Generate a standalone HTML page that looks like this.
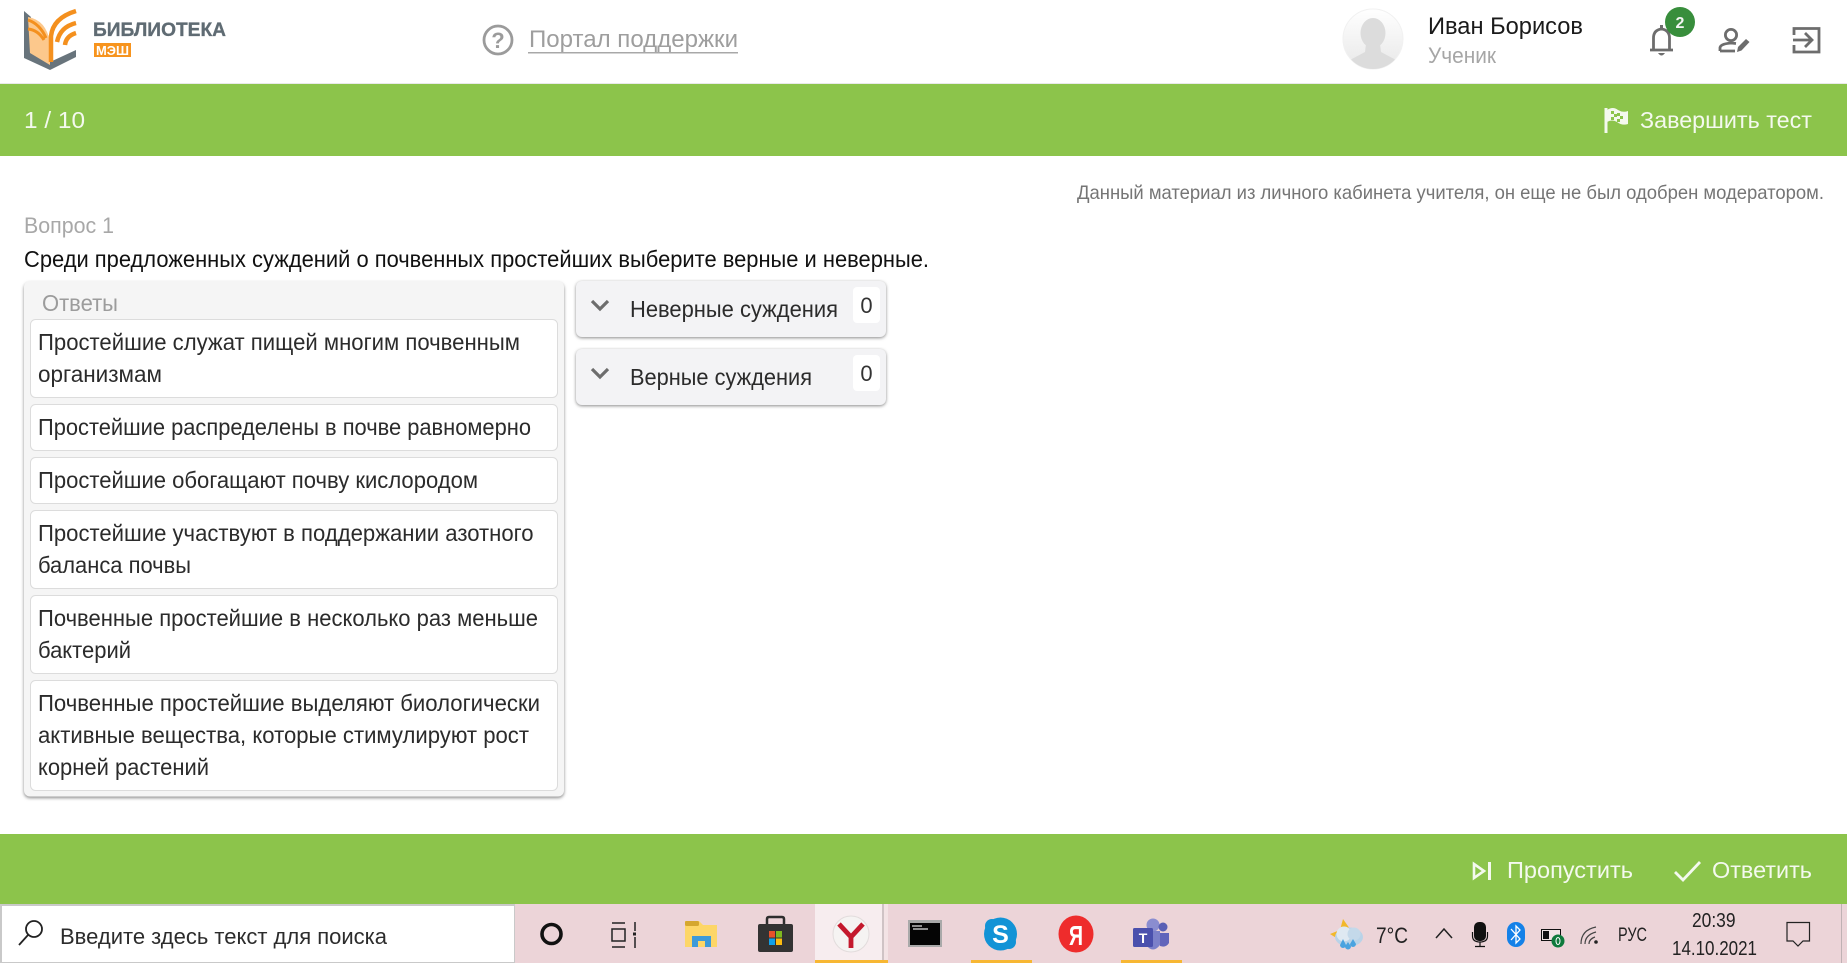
<!DOCTYPE html>
<html lang="ru"><head><meta charset="utf-8"><title>Библиотека МЭШ</title>
<style>
html,body{margin:0;padding:0;background:#fff;width:1847px;height:963px;overflow:hidden}
svg{display:block}
text{font-family:"Liberation Sans","DejaVu Sans",sans-serif}
.b{font-size:23px;fill:#2b2b2b}
.w{font-size:23px;fill:#f4f9ee}
.t{font-size:22px;fill:#2c2c2c}
</style></head><body>
<svg xmlns="http://www.w3.org/2000/svg" width="1847" height="963" viewBox="0 0 1847 963">
<defs>
<linearGradient id="av" x1="0" y1="0" x2="0" y2="1"><stop offset="0" stop-color="#fff"/><stop offset="1" stop-color="#e8e8e8"/></linearGradient>
<clipPath id="avc"><circle cx="1373" cy="39" r="30"/></clipPath>
<filter id="sh" x="-5%" y="-5%" width="110%" height="115%"><feGaussianBlur stdDeviation="1.500"/></filter>
</defs>
<rect width="1847" height="963" fill="#fff"/>
<!-- logo -->
<path d="M24 11 L24 58 L50 70 L76 57 L76 50 L50 62 L31 53 L31 17 Z" fill="#68747c"/>
<path d="M28 17 Q46 20 50 42 L50 65 L30 53 Z" fill="#fcc88c"/>
<path d="M28 20 Q40 24 46 38 M28 29 Q38 30 44 40" stroke="#f4901e" stroke-width="3" fill="none"/>
<path d="M51 62 L51 36 Q53 18 76 11" stroke="#f4901e" stroke-width="4.500" fill="none"/>
<path d="M57 42 Q60 27 76 23 M65 45 Q66 36 76 33" stroke="#f4901e" stroke-width="4.500" fill="none"/>
<text x="93" y="36" font-size="19" font-weight="bold" fill="#5f6b73" stroke="#5f6b73" stroke-width=".3" textLength="133" lengthAdjust="spacingAndGlyphs">БИБЛИОТЕКА</text>
<rect x="94" y="43" width="37" height="14" fill="#f7941e"/>
<text x="96" y="55" font-size="13" font-weight="bold" fill="#fff" textLength="33" lengthAdjust="spacingAndGlyphs">МЭШ</text>
<!-- portal -->
<circle cx="498" cy="40" r="14" fill="none" stroke="#9b9b9b" stroke-width="2.800"/>
<text x="498" y="48" font-size="22" font-weight="bold" fill="#9b9b9b" text-anchor="middle">?</text>
<text x="529" y="47" font-size="24" fill="#9e9e9e" textLength="209" lengthAdjust="spacingAndGlyphs">Портал поддержки</text>
<rect x="528" y="52" width="210" height="1.500" fill="#a8a8a8"/>
<!-- user -->
<circle cx="1373" cy="39" r="30" fill="url(#av)" stroke="#f1f1f1"/>
<g clip-path="url(#avc)" fill="#dcdcdc">
<ellipse cx="1373" cy="33" rx="12.500" ry="15"/>
<path d="M1366 44 L1380 44 L1381 52 L1396 60 L1398 72 L1348 72 L1350 60 L1365 52 Z"/>
</g>
<text x="1428" y="34" font-size="24.500" fill="#1a1a1a" textLength="155" lengthAdjust="spacingAndGlyphs">Иван Борисов</text>
<text x="1428" y="63" font-size="22" fill="#a6a6a6" textLength="68" lengthAdjust="spacingAndGlyphs">Ученик</text>
<!-- bell -->
<path d="M1650 50 L1673 50 M1653.500 49 L1653.500 38 Q1653.500 30 1661.500 29 Q1669.500 30 1669.500 38 L1669.500 49" fill="none" stroke="#6d6d6d" stroke-width="2.800"/>
<rect x="1660" y="25" width="3" height="4" fill="#6d6d6d"/>
<path d="M1658 53 Q1661.500 58 1665 53 Z" fill="#6d6d6d"/>
<circle cx="1680" cy="22" r="15" fill="#388e3c"/>
<text x="1680" y="28" font-size="16" font-weight="bold" fill="#f4f4f4" text-anchor="middle">2</text>
<!-- user edit -->
<circle cx="1731" cy="35" r="5.600" fill="none" stroke="#6d6d6d" stroke-width="2.800"/>
<path d="M1720 51 L1720 48 Q1720 44 1731 43 L1736 43.500 M1720 51 L1735 51" fill="none" stroke="#6d6d6d" stroke-width="2.800"/>
<path d="M1737 52 L1738 47 L1746 39 L1749.500 42 L1741.500 50.500 Z" fill="#6d6d6d"/>
<!-- exit -->
<path d="M1794 35 L1794 28.500 L1819 28.500 L1819 52 L1794 52 L1794 45" fill="none" stroke="#6d6d6d" stroke-width="2.800"/>
<path d="M1793 40 L1812 40 M1805 33 L1812 40 L1805 47" fill="none" stroke="#6d6d6d" stroke-width="2.800"/>
<!-- top bar -->
<rect x="0" y="83" width="1847" height="1" fill="#e9e9e9"/>
<rect x="0" y="84" width="1847" height="72" fill="#8cc44b"/>
<text x="24" y="128" class="w" textLength="61" lengthAdjust="spacingAndGlyphs">1 / 10</text>
<path d="M1606 108 L1606 133" stroke="#f4f9ee" stroke-width="3"/>
<path d="M1607 110 Q1613 106 1618 110 Q1623 113 1628 111 L1628 124 Q1622 126 1617 122 Q1612 119 1607 122 Z" fill="#f4f9ee"/>
<path d="M1611 111 h3 v3 h-3z M1617 113 h3 v3 h-3z M1614 114 h3 v3 h-3z M1620 116 h3 v3 h-3z M1611 117 h3 v3 h-3z M1617 119 h3 v3 h-3z" fill="#8cc44b"/>
<text x="1640" y="128" class="w" textLength="172" lengthAdjust="spacingAndGlyphs">Завершить тест</text>
<!-- headers -->
<text x="1077" y="199" font-size="19.500" fill="#757575" textLength="747" lengthAdjust="spacingAndGlyphs">Данный материал из личного кабинета учителя, он еще не был одобрен модератором.</text>
<text x="24" y="233" font-size="22" fill="#a8a8a8" textLength="90" lengthAdjust="spacingAndGlyphs">Вопрос 1</text>
<text x="24" y="267" font-size="23" fill="#111" textLength="905" lengthAdjust="spacingAndGlyphs">Среди предложенных суждений о почвенных простейших выберите верные и неверные.</text>
<!-- answers panel -->
<rect x="24" y="283" width="540" height="515" rx="6" fill="#8a8a8a" filter="url(#sh)"/>
<rect x="24" y="281" width="540" height="515.500" rx="6" fill="#f5f5f5"/>
<text x="42" y="311" font-size="23" fill="#9c9c9c" textLength="76" lengthAdjust="spacingAndGlyphs">Ответы</text>
<g fill="#fff" stroke="#dcdcdc" stroke-width="1">
<rect x="30.500" y="319.500" width="527" height="78" rx="5"/>
<rect x="30.500" y="404.500" width="527" height="46" rx="5"/>
<rect x="30.500" y="457.500" width="527" height="46" rx="5"/>
<rect x="30.500" y="510.500" width="527" height="78" rx="5"/>
<rect x="30.500" y="595.500" width="527" height="78" rx="5"/>
<rect x="30.500" y="680.500" width="527" height="110" rx="5"/>
</g>
<text x="38" y="350" class="b" textLength="482" lengthAdjust="spacingAndGlyphs">Простейшие служат пищей многим почвенным</text>
<text x="38" y="382" class="b" textLength="124" lengthAdjust="spacingAndGlyphs">организмам</text>
<text x="38" y="435" class="b" textLength="493" lengthAdjust="spacingAndGlyphs">Простейшие распределены в почве равномерно</text>
<text x="38" y="488" class="b" textLength="440" lengthAdjust="spacingAndGlyphs">Простейшие обогащают почву кислородом</text>
<text x="38" y="541" class="b" textLength="495.500" lengthAdjust="spacingAndGlyphs">Простейшие участвуют в поддержании азотного</text>
<text x="38" y="573" class="b" textLength="153" lengthAdjust="spacingAndGlyphs">баланса почвы</text>
<text x="38" y="626" class="b" textLength="500" lengthAdjust="spacingAndGlyphs">Почвенные простейшие в несколько раз меньше</text>
<text x="38" y="658" class="b" textLength="93" lengthAdjust="spacingAndGlyphs">бактерий</text>
<text x="38" y="711" class="b" textLength="502" lengthAdjust="spacingAndGlyphs">Почвенные простейшие выделяют биологически</text>
<text x="38" y="743" class="b" textLength="491" lengthAdjust="spacingAndGlyphs">активные вещества, которые стимулируют рост</text>
<text x="38" y="775" class="b" textLength="171" lengthAdjust="spacingAndGlyphs">корней растений</text>
<!-- right panels -->
<rect x="576" y="282" width="310" height="56" rx="6" fill="#8a8a8a" filter="url(#sh)"/>
<rect x="576" y="281" width="310" height="56" rx="6" fill="#f3f3f5"/>
<rect x="853" y="287" width="27" height="36" rx="4" fill="#fff"/>
<path d="M592 301 L600 309 L608 301" fill="none" stroke="#6d6d6d" stroke-width="3.200"/>
<text x="630" y="317" class="b" textLength="208" lengthAdjust="spacingAndGlyphs">Неверные суждения</text>
<text x="866.500" y="313" font-size="22" fill="#333" text-anchor="middle">0</text>
<rect x="576" y="350" width="310" height="56" rx="6" fill="#8a8a8a" filter="url(#sh)"/>
<rect x="576" y="349" width="310" height="56" rx="6" fill="#f3f3f5"/>
<rect x="853" y="355" width="27" height="36" rx="4" fill="#fff"/>
<path d="M592 369 L600 377 L608 369" fill="none" stroke="#6d6d6d" stroke-width="3.200"/>
<text x="630" y="385" class="b" textLength="182" lengthAdjust="spacingAndGlyphs">Верные суждения</text>
<text x="866.500" y="381" font-size="22" fill="#333" text-anchor="middle">0</text>
<!-- bottom bar -->
<rect x="0" y="834" width="1847" height="70" fill="#8cc44b"/>
<path d="M1474 864 L1484 871 L1474 878 Z" fill="none" stroke="#f4f9ee" stroke-width="2.600"/>
<rect x="1488" y="862" width="3" height="18" fill="#f4f9ee"/>
<text x="1507" y="878" class="w" textLength="126" lengthAdjust="spacingAndGlyphs">Пропустить</text>
<path d="M1675 872 L1683 880 L1700 862" fill="none" stroke="#f4f9ee" stroke-width="2.800"/>
<text x="1712" y="878" class="w" textLength="100" lengthAdjust="spacingAndGlyphs">Ответить</text>
<!-- taskbar -->
<rect x="0" y="904" width="1847" height="59" fill="#ecd4d8"/>
<rect x="0" y="904" width="515" height="59" fill="#c9c9c9"/>
<rect x="2" y="906" width="512" height="56" fill="#fff"/>
<circle cx="34" cy="929" r="8" fill="none" stroke="#222" stroke-width="1.800"/>
<path d="M28 935 L19 945" stroke="#222" stroke-width="1.800"/>
<text x="60" y="944" class="t" textLength="327" lengthAdjust="spacingAndGlyphs">Введите здесь текст для поиска</text>
<circle cx="551.500" cy="934" r="9.500" fill="none" stroke="#111" stroke-width="3.600"/>
<!-- task view -->
<path d="M612 923 H625 M612 947 H625 M612 929 H625 V941 H612 Z M635 922 V931 M635 937 V948" fill="none" stroke="#222" stroke-width="1.500"/>
<rect x="633" y="932.500" width="3" height="3" fill="#222"/>
<!-- explorer -->
<path d="M685 921 H699 L703 925 H717 V947 H685 Z" fill="#fdd667"/>
<rect x="685" y="921" width="14" height="5" rx="1.500" fill="#d5a72f"/>
<path d="M692 947 V936 H711 V947 H705 V941 H698 V947 Z" fill="#3d9ad9"/>
<rect x="698" y="941" width="7" height="6" fill="#fdd667"/>
<!-- store -->
<path d="M767 927 V919 Q767 917 769 917 H782 Q784 917 784 919 V927" fill="none" stroke="#2e2e2e" stroke-width="2.500"/>
<rect x="758" y="924" width="35" height="28" rx="2" fill="#333"/>
<rect x="769" y="931" width="6" height="6.500" fill="#e8512a"/><rect x="776" y="931" width="6" height="6.500" fill="#7fb81f"/>
<rect x="769" y="938.500" width="6" height="6.500" fill="#10a0e8"/><rect x="776" y="938.500" width="6" height="6.500" fill="#fbbb10"/>
<!-- yandex browser -->
<rect x="815" y="904" width="67" height="59" fill="#f7edef"/>
<rect x="882" y="904" width="2" height="59" fill="#cfc3c5"/>
<rect x="884" y="904" width="4" height="59" fill="#f3e3e5"/>
<rect x="815" y="960" width="73" height="3" fill="#f7b733"/>
<circle cx="851" cy="934" r="18" fill="#f5f3f2" stroke="#e2dcdc"/>
<path d="M839 924 L851 937 L863 924 M851 937 V948" fill="none" stroke="#c4192d" stroke-width="4.800"/>
<!-- cmd -->
<rect x="908" y="920" width="34" height="27" fill="#a9a9a9"/>
<rect x="910" y="923" width="30" height="22" fill="#050505"/>
<path d="M912 926 H922 M913 929 H928" stroke="#bbb" stroke-width="1.500"/>
<!-- skype -->
<circle cx="1000.500" cy="934" r="16.500" fill="#1293d6"/>
<circle cx="992" cy="926" r="7" fill="#1293d6"/><circle cx="1009" cy="942" r="7" fill="#1293d6"/>
<text x="1000.500" y="943" font-size="25" font-weight="bold" fill="#fff" text-anchor="middle">S</text>
<rect x="971" y="960" width="61" height="3" fill="#f7b733"/>
<!-- yandex -->
<ellipse cx="1076" cy="934" rx="17.500" ry="18.500" fill="#ee2c2c"/>
<text x="1076" y="945" font-size="28" font-weight="bold" fill="#fff" text-anchor="middle" textLength="14" lengthAdjust="spacingAndGlyphs">Я</text>
<!-- teams -->
<circle cx="1153" cy="925" r="6.500" fill="#8a8dd0"/><circle cx="1163" cy="927" r="4.500" fill="#5a60b5"/>
<path d="M1146 931 H1160 V945 Q1153 954 1146 945 Z" fill="#7b80c9"/>
<path d="M1160 933 H1169 V943 Q1166 948 1160 946 Z" fill="#6165bb"/>
<rect x="1133" y="928" width="20" height="19" rx="1.500" fill="#4a50ad"/>
<text x="1143" y="943" font-size="14" font-weight="bold" fill="#fff" text-anchor="middle">T</text>
<rect x="1121" y="960" width="61" height="3" fill="#f7b733"/>
<!-- tray -->
<path d="M1338 939 L1330 934 L1340 930 L1343 919 L1350 929 Z" fill="#f2b82a"/>
<ellipse cx="1349" cy="937" rx="14" ry="9.500" fill="#b9d3e8"/><circle cx="1344" cy="934" r="7.500" fill="#dfe9f2"/><circle cx="1354" cy="934" r="6.500" fill="#c4d9ea"/>
<path d="M1343 939 l-3 6 a3 3 0 0 0 6 0 Z M1353 939 l-3 5 a3 3 0 0 0 6 0 Z M1348 942 l-3 4.500 a3 3 0 0 0 6 0 Z" fill="#4aa3e0"/>
<text x="1376" y="943" font-size="22" fill="#222" textLength="32" lengthAdjust="spacingAndGlyphs">7°C</text>
<path d="M1436 938 L1444 929 L1452 938" fill="none" stroke="#222" stroke-width="1.500"/>
<rect x="1474" y="922" width="12" height="19" rx="5" fill="#111"/>
<path d="M1472.500 932 V936 Q1472.500 942 1480 942 Q1487.500 942 1487.500 936 V932 M1480 942 V946 M1475 946.500 H1485" fill="none" stroke="#111" stroke-width="1.200"/>
<rect x="1507" y="922" width="18" height="25" rx="9" fill="#1481e8"/>
<path d="M1511 929 L1520 939 L1516 943 V926 L1520 930 L1511 940" fill="none" stroke="#fff" stroke-width="1.300"/>
<rect x="1541.500" y="929.500" width="19" height="11" fill="#f0e5e5" stroke="#111"/>
<rect x="1543" y="931" width="6" height="8" fill="#111"/>
<circle cx="1558" cy="941" r="6.500" fill="#0e7a3c"/>
<ellipse cx="1558" cy="941" rx="2" ry="3.500" fill="none" stroke="#fff" stroke-width="1"/>
<g fill="none" stroke="#444" stroke-width="1.200"><path d="M1581 944 Q1581 930 1596 927"/><path d="M1585 944 Q1585 935 1596 932"/><path d="M1589 944 Q1589 939 1595 937"/></g>
<circle cx="1596" cy="942" r="1.800" fill="#222"/>
<text x="1618" y="941" font-size="19" fill="#222" textLength="29" lengthAdjust="spacingAndGlyphs">РУС</text>
<text x="1692" y="927" font-size="20" fill="#222" textLength="43.500" lengthAdjust="spacingAndGlyphs">20:39</text>
<text x="1672" y="955" font-size="20" fill="#222" textLength="85" lengthAdjust="spacingAndGlyphs">14.10.2021</text>
<path d="M1787 922.500 H1809.500 V941 H1803 L1798 946 L1793 941 H1787 Z" fill="none" stroke="#222" stroke-width="1.200"/>
<rect x="1841" y="904" width="1" height="59" fill="#bfb2b4"/>
</svg>
</body></html>
